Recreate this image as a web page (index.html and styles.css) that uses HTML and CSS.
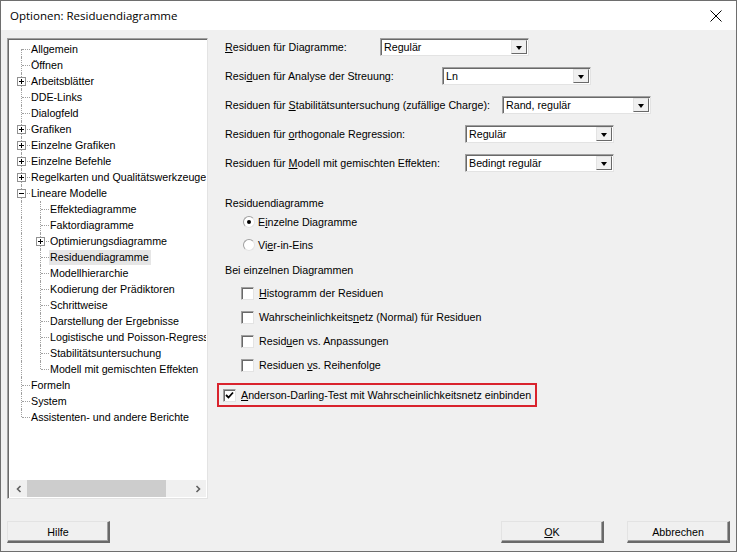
FILE: index.html
```html
<!DOCTYPE html>
<html lang="de">
<head>
<meta charset="utf-8">
<title>Optionen: Residuendiagramme</title>
<link rel="stylesheet" href="styles.css">
</head>
<body>
<div class="window">
  <div class="titlebar">
    <span class="title">Optionen: Residuendiagramme</span>
    <span class="close"><svg width="12" height="12" viewBox="0 0 12 12"><path d="M0.5 0.5L11.5 11.5M11.5 0.5L0.5 11.5" stroke="#000" stroke-width="1" fill="none"/></svg></span>
  </div>
  <div class="body">
    <div class="main">
      <div class="tree">
        <div class="tree-items">
          <div class="row"><span class="c f"></span><span class="lab">Allgemein</span></div>
          <div class="row"><span class="c t"></span><span class="lab">Öffnen</span></div>
          <div class="row"><span class="c t"><span class="exp plus"></span></span><span class="lab">Arbeitsblätter</span></div>
          <div class="row"><span class="c t"></span><span class="lab">DDE-Links</span></div>
          <div class="row"><span class="c t"></span><span class="lab">Dialogfeld</span></div>
          <div class="row"><span class="c t"><span class="exp plus"></span></span><span class="lab">Grafiken</span></div>
          <div class="row"><span class="c t"><span class="exp plus"></span></span><span class="lab">Einzelne Grafiken</span></div>
          <div class="row"><span class="c t"><span class="exp plus"></span></span><span class="lab">Einzelne Befehle</span></div>
          <div class="row"><span class="c t"><span class="exp plus"></span></span><span class="lab">Regelkarten und Qualitätswerkzeuge</span></div>
          <div class="row"><span class="c t"><span class="exp minus"></span></span><span class="lab">Lineare Modelle</span></div>
          <div class="row"><span class="c v"></span><span class="c t"></span><span class="lab">Effektediagramme</span></div>
          <div class="row"><span class="c v"></span><span class="c t"></span><span class="lab">Faktordiagramme</span></div>
          <div class="row"><span class="c v"></span><span class="c t"><span class="exp plus"></span></span><span class="lab">Optimierungsdiagramme</span></div>
          <div class="row"><span class="c v"></span><span class="c t"></span><span class="lab sel">Residuendiagramme</span></div>
          <div class="row"><span class="c v"></span><span class="c t"></span><span class="lab">Modellhierarchie</span></div>
          <div class="row"><span class="c v"></span><span class="c t"></span><span class="lab">Kodierung der Prädiktoren</span></div>
          <div class="row"><span class="c v"></span><span class="c t"></span><span class="lab">Schrittweise</span></div>
          <div class="row"><span class="c v"></span><span class="c t"></span><span class="lab">Darstellung der Ergebnisse</span></div>
          <div class="row"><span class="c v"></span><span class="c t"></span><span class="lab">Logistische und Poisson-Regression</span></div>
          <div class="row"><span class="c v"></span><span class="c t"></span><span class="lab">Stabilitätsuntersuchung</span></div>
          <div class="row"><span class="c v"></span><span class="c l"></span><span class="lab">Modell mit gemischten Effekten</span></div>
          <div class="row"><span class="c t"></span><span class="lab">Formeln</span></div>
          <div class="row"><span class="c t"></span><span class="lab">System</span></div>
          <div class="row"><span class="c l"></span><span class="lab">Assistenten- und andere Berichte</span></div>
        </div>
        <div class="hscroll">
          <span class="sarrow"><svg width="8" height="8" viewBox="0 0 8 8"><path d="M5.5 1L2.5 4L5.5 7" stroke="#606060" stroke-width="1.6" fill="none"/></svg></span>
          <span class="strack"><span class="sthumb"></span></span>
          <span class="sarrow"><svg width="8" height="8" viewBox="0 0 8 8"><path d="M2.5 1L5.5 4L2.5 7" stroke="#606060" stroke-width="1.6" fill="none"/></svg></span>
        </div>
      </div>

      <div class="panel">
        <div class="frow">
          <span class="flabel w1"><u>R</u>esiduen für Diagramme:</span>
          <span class="select"><span class="sval">Regulär</span><span class="sbtn"><span class="tri"></span></span></span>
        </div>
        <div class="frow">
          <span class="flabel w2">Resi<u>d</u>uen für Analyse der Streuung:</span>
          <span class="select"><span class="sval">Ln</span><span class="sbtn"><span class="tri"></span></span></span>
        </div>
        <div class="frow">
          <span class="flabel w3">Residuen für <u>S</u>tabilitätsuntersuchung (zufällige Charge):</span>
          <span class="select"><span class="sval">Rand, regulär</span><span class="sbtn"><span class="tri"></span></span></span>
        </div>
        <div class="frow">
          <span class="flabel w4">Residuen für <u>o</u>rthogonale Regression:</span>
          <span class="select"><span class="sval">Regulär</span><span class="sbtn"><span class="tri"></span></span></span>
        </div>
        <div class="frow">
          <span class="flabel w4">Residuen für <u>M</u>odell mit gemischten Effekten:</span>
          <span class="select"><span class="sval">Bedingt regulär</span><span class="sbtn"><span class="tri"></span></span></span>
        </div>

        <div class="glabel g1">Residuendiagramme</div>
        <div class="opt r1"><span class="radio on"></span><span>E<u>i</u>nzelne Diagramme</span></div>
        <div class="opt r2"><span class="radio"></span><span>Vi<u>e</u>r-in-Eins</span></div>

        <div class="glabel g2">Bei einzelnen Diagrammen</div>
        <div class="opt c1"><span class="check"></span><span><u>H</u>istogramm der Residuen</span></div>
        <div class="opt c2"><span class="check"></span><span>Wahrscheinlichkeits<u>n</u>etz (Normal) für Residuen</span></div>
        <div class="opt c2"><span class="check"></span><span>Resid<u>u</u>en vs. Anpassungen</span></div>
        <div class="opt c2"><span class="check"></span><span>Residuen <u>v</u>s. Reihenfolge</span></div>

        <div class="highlight">
          <span class="check on"><svg width="9" height="9" viewBox="0 0 9 9"><path d="M1 4L3.5 6.5L8 1.5" stroke="#000" stroke-width="1.8" fill="none"/></svg></span>
          <span><u>A</u>nderson-Darling-Test mit Wahrscheinlichkeitsnetz einbinden</span>
        </div>
      </div>
    </div>

    <div class="footer">
      <button class="btn">Hilfe</button>
      <span class="spacer"></span>
      <button class="btn"><u>O</u>K</button>
      <button class="btn">Abbrechen</button>
    </div>
  </div>
</div>
</body>
</html>
```

FILE: styles.css
```css
* { box-sizing: border-box; }

html, body {
  margin: 0;
  padding: 0;
  background: #f0f0f0;
}

body {
  font-family: "Liberation Sans", Arial, sans-serif;
  font-size: 10.7px;
  color: #000;
}

u { text-decoration: underline; text-underline-offset: 1px; }

.window {
  width: 737px;
  height: 552px;
  border: 1px solid #6e6e6e;
  background: #f0f0f0;
  display: flex;
  flex-direction: column;
}

.titlebar {
  height: 29px;
  background: #fff;
  display: flex;
  align-items: center;
  padding: 0 10px 0 9px;
  flex: none;
}

.title {
  font-family: "Open Sans", "Noto Sans", sans-serif;
  font-size: 11.5px;
  flex: 1;
  padding-bottom: 1px;
}

.close {
  display: flex;
  margin-right: 4px;
}

.body {
  flex: 1;
  display: flex;
  flex-direction: column;
  padding: 8px 6px 8px 6px;
}

.main {
  display: flex;
  height: 461px;
  flex: none;
}

/* ---------- tree ---------- */
.tree {
  width: 201px;
  height: 461px;
  border: 1px solid #a0a0a0;
  border-right-color: #e3e3e3;
  border-bottom-color: #e3e3e3;
  box-shadow: inset 1px 1px 0 #696969;
  background: #fff;
  display: flex;
  flex-direction: column;
  padding: 2px 1px 1px 2px;
  flex: none;
}

.tree-items {
  flex: 1;
  overflow: hidden;
  padding: 0 0 0 2px;
}

.row {
  display: flex;
  height: 16px;
  white-space: nowrap;
  align-items: center;
}

.c {
  width: 19px;
  height: 16px;
  position: relative;
  flex: none;
}

.c::before {
  content: "";
  position: absolute;
  left: 9px;
  top: 0;
  bottom: 0;
  border-left: 1px dotted #a0a0a0;
}

.c.f::before { top: 8px; }
.c.l::before { bottom: 8px; }

.c.t::after, .c.f::after, .c.l::after {
  content: "";
  position: absolute;
  left: 10px;
  top: 8px;
  width: 8px;
  border-top: 1px dotted #a0a0a0;
}

.exp {
  position: absolute;
  left: 5px;
  top: 4px;
  width: 9px;
  height: 9px;
  border: 1px solid #919191;
  background: #fff;
  z-index: 1;
}

.exp::before {
  content: "";
  position: absolute;
  left: 1px;
  top: 3px;
  width: 5px;
  height: 1px;
  background: #000;
}

.exp.plus::after {
  content: "";
  position: absolute;
  left: 3px;
  top: 1px;
  width: 1px;
  height: 5px;
  background: #000;
}

.lab {
  padding: 1px 2px 1px 0;
  line-height: 13px;
}

.lab.sel {
  background: #e6e6e6;
  padding-left: 1px;
  margin-left: -1px;
}

.hscroll {
  height: 17px;
  display: flex;
  background: #f0f0f0;
  flex: none;
}

.sarrow {
  width: 17px;
  display: flex;
  align-items: center;
  justify-content: center;
  flex: none;
}

.strack {
  flex: 1;
  display: flex;
  align-items: stretch;
}

.sthumb {
  width: 139px;
  background: #cdcdcd;
}

/* ---------- panel ---------- */
.panel {
  flex: 1;
  padding: 0 0 0 17px;
  display: flex;
  flex-direction: column;
}

.frow {
  display: flex;
  align-items: center;
  height: 18px;
  margin-bottom: 11px;
}

.flabel { flex: none; white-space: nowrap; }
.w1 { width: 155px; }
.w2 { width: 217px; }
.w3 { width: 277px; }
.w4 { width: 240px; }

.select {
  width: 149px;
  height: 18px;
  background: #fff;
  border: 1px solid #a0a0a0;
  border-right-color: #e3e3e3;
  border-bottom-color: #e3e3e3;
  box-shadow: inset 1px 1px 0 #696969;
  display: flex;
  align-items: stretch;
  padding: 1px;
}

.sval {
  flex: 1;
  padding-left: 2px;
  line-height: 15px;
}

.sbtn {
  width: 16px;
  background: #f0f0f0;
  border-top: 1px solid #e3e3e3;
  border-left: 1px solid #e3e3e3;
  border-right: 1px solid #696969;
  border-bottom: 1px solid #696969;
  display: flex;
  align-items: center;
  justify-content: center;
}

.tri {
  width: 0;
  height: 0;
  border-left: 3.5px solid transparent;
  border-right: 3.5px solid transparent;
  border-top: 4px solid #000;
  margin-top: 1px;
}

.glabel {
  height: 16px;
  line-height: 16px;
  white-space: nowrap;
}

.g1 { margin-top: 12px; }
.g2 { margin-top: 9px; }

.opt {
  display: flex;
  align-items: center;
  height: 16px;
  padding-left: 16px;
  white-space: nowrap;
}

.r1 { margin-top: 3px; }
.r2 { margin-top: 7px; }
.c1 { margin-top: 7px; }
.c2 { margin-top: 8px; }

.radio {
  width: 12px;
  height: 12px;
  border-radius: 50%;
  background: #fff;
  border: 1px solid;
  border-color: #a0a0a0 #e3e3e3 #e3e3e3 #a0a0a0;
  margin: 0 3px 0 2px;
  position: relative;
  flex: none;
}

.radio.on::after {
  content: "";
  position: absolute;
  left: 3px;
  top: 3px;
  width: 4px;
  height: 4px;
  border-radius: 50%;
  background: #000;
}

.check {
  width: 13px;
  height: 13px;
  background: #fff;
  border: 1px solid;
  border-color: #a0a0a0 #e3e3e3 #e3e3e3 #a0a0a0;
  box-shadow: inset 1px 1px 0 #696969;
  margin-right: 5px;
  flex: none;
  display: flex;
  align-items: center;
  justify-content: center;
}

.highlight {
  margin-top: 10px;
  width: 320px;
  height: 24px;
  border: 2px solid #d9232d;
  display: flex;
  align-items: center;
  padding-left: 4px;
  margin-left: -8px;
  white-space: nowrap;
}

/* ---------- footer ---------- */
.footer {
  display: flex;
  align-items: flex-end;
  margin-top: 22px;
}

.spacer { flex: 1; }

.btn {
  width: 103px;
  height: 22px;
  margin: 0;
  padding: 0;
  font-family: "Liberation Sans", Arial, sans-serif;
  font-size: 10.7px;
  color: #000;
  background: #f0f0f0;
  border-top: 1px solid #e3e3e3;
  border-left: 1px solid #e3e3e3;
  border-right: 2px solid #696969;
  border-bottom: 2px solid #696969;
  box-shadow: inset -1px -1px 0 #a0a0a0;
}

.btn + .btn { margin-left: 23px; }
```
